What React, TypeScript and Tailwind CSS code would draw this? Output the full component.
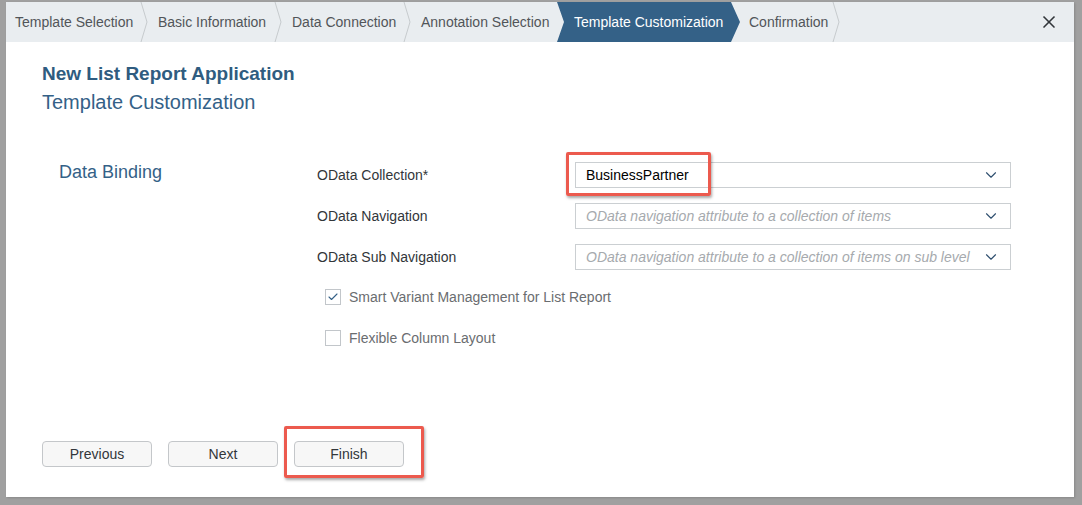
import { X, ChevronDown, Check } from "lucide-react";

const font = { fontFamily: '"Liberation Sans", Arial, sans-serif' };

function Sep() {
  return (
    <svg width="10" height="40" viewBox="0 0 10 40" className="shrink-0">
      <polyline points="2,0 8,20 2,40" fill="none" stroke="#c6cacd" strokeWidth="1" />
    </svg>
  );
}

function Step({ label, w }: { label: string; w: number }) {
  return (
    <div className="flex h-full items-center">
      <div className="flex h-full items-center pl-[9px] text-[14px] text-[#515559]" style={{ width: w }}>
        {label}
      </div>
      <Sep />
    </div>
  );
}

function Select({ value, placeholder }: { value?: string; placeholder?: string }) {
  return (
    <div className="flex h-[26px] w-[436px] items-center border border-[#cbcfd2] bg-white pl-[10px] pr-[10px]">
      <span className={value ? "flex-1 truncate text-[14px] text-[#000]" : "flex-1 truncate text-[14px] italic text-[#a6aaae]"}>
        {value ?? placeholder}
      </span>
      <ChevronDown size={18} strokeWidth={1.5} className="text-[#2f4f6f]" />
    </div>
  );
}

function Box({ checked, label }: { checked?: boolean; label: string }) {
  return (
    <div className="flex items-center gap-[8px] pl-[8px]">
      <div className="flex h-[16px] w-[16px] items-center justify-center border border-[#c2c6ca] bg-white">
        {checked && <Check size={12} strokeWidth={2.2} className="text-[#346187]" />}
      </div>
      <span className="text-[14px] leading-[20px] text-[#6a6d70]">{label}</span>
    </div>
  );
}

function Btn({ label }: { label: string }) {
  return (
    <button className="h-[26px] w-[110px] rounded-[4px] border border-[#c4c7ca] bg-[#f7f7f7] text-[14px] text-[#32363a]">
      {label}
    </button>
  );
}

export default function App() {
  return (
    <div className="relative h-[505px] w-[1082px] overflow-hidden bg-[#a0a0a0] pl-[6px] pt-[2px]" style={font}>
      <div className="flex h-[495px] w-[1068px] flex-col bg-white shadow-[1px_1px_2px_rgba(0,0,0,0.15)]">
        {/* stepper */}
        <div className="flex h-[40px] items-center bg-[#e9edf0]">
          <Step label="Template Selection" w={133} />
          <Step label="Basic Information" w={124} />
          <Step label="Data Connection" w={119} />
          <div className="flex h-full w-[145px] items-center pl-[9px] text-[14px] text-[#515559]">Annotation Selection</div>
          <div
            className="flex h-full w-[183px] items-center bg-[#346187] pl-[17px] text-[14px] text-white"
            style={{ clipPath: "polygon(0 0, 174px 0, 183px 20px, 174px 40px, 0 40px, 7px 20px)" }}
          >
            Template Customization
          </div>
          <Step label="Confirmation" w={91} />
          <div className="flex-1" />
          <X size={20} strokeWidth={2} className="mr-[15px] text-[#32363a]" />
        </div>

        {/* header */}
        <div className="pl-[36px] pt-[20px]">
          <div className="text-[19px] font-bold leading-[24px] text-[#2f5c80]">New List Report Application</div>
          <div className="mt-[4px] text-[20px] leading-[24px] text-[#346187]">Template Customization</div>
        </div>

        {/* form */}
        <div className="mt-[48px] flex">
          <div className="-mt-[3px] w-[311px] pl-[53px] text-[18px] leading-[26px] text-[#346187]">Data Binding</div>
          <div className="flex flex-col">
            <div className="flex flex-col gap-[15px]">
              {[
                { l: "OData Collection*", v: "BusinessPartner" },
                { l: "OData Navigation", p: "OData navigation attribute to a collection of items" },
                { l: "OData Sub Navigation", p: "OData navigation attribute to a collection of items on sub level" },
              ].map((r) => (
                <div key={r.l} className="flex items-center">
                  <div className="w-[258px] text-[14px] text-[#32363a]">{r.l}</div>
                  <Select value={r.v} placeholder={r.p} />
                </div>
              ))}
            </div>
            <div className="mt-[17px] flex flex-col gap-[21px]">
              <Box checked label="Smart Variant Management for List Report" />
              <Box label="Flexible Column Layout" />
            </div>
          </div>
        </div>

        <div className="flex-1" />

        {/* footer */}
        <div className="flex gap-[16px] pb-[30px] pl-[36px]">
          <Btn label="Previous" />
          <Btn label="Next" />
          <Btn label="Finish" />
        </div>
      </div>

      {/* highlight callouts */}
      <div className="absolute left-[566px] top-[152px] h-[44px] w-[145px] rounded-[2px] border-[3px] border-[#ec5a4e] shadow-[1px_2px_3px_rgba(0,0,0,0.35)]" />
      <div className="absolute left-[284px] top-[426px] h-[52px] w-[140px] rounded-[2px] border-[3px] border-[#ec5a4e] shadow-[1px_2px_3px_rgba(0,0,0,0.35)]" />
    </div>
  );
}
